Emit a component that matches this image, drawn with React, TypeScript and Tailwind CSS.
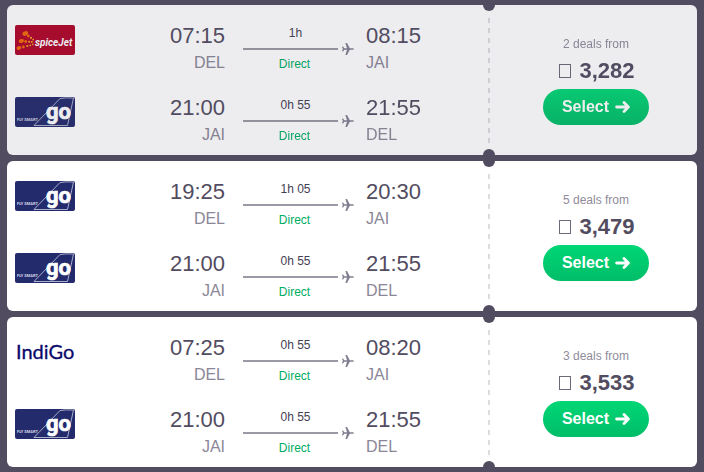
type Airline = "spicejet" | "go" | "indigo";

interface Leg {
  airline: Airline;
  departs: string;
  from: string;
  duration: string;
  arrives: string;
  to: string;
}

interface Itinerary {
  id: number;
  deals: number;
  price: string;
  dimmed?: boolean;
  legs: Leg[];
}

const itineraries: Itinerary[] = [
  {
    id: 1,
    deals: 2,
    price: "3,282",
    dimmed: true,
    legs: [
      { airline: "spicejet", departs: "07:15", from: "DEL", duration: "1h", arrives: "08:15", to: "JAI" },
      { airline: "go", departs: "21:00", from: "JAI", duration: "0h 55", arrives: "21:55", to: "DEL" },
    ],
  },
  {
    id: 2,
    deals: 5,
    price: "3,479",
    legs: [
      { airline: "go", departs: "19:25", from: "DEL", duration: "1h 05", arrives: "20:30", to: "JAI" },
      { airline: "go", departs: "21:00", from: "JAI", duration: "0h 55", arrives: "21:55", to: "DEL" },
    ],
  },
  {
    id: 3,
    deals: 3,
    price: "3,533",
    legs: [
      { airline: "indigo", departs: "07:25", from: "DEL", duration: "0h 55", arrives: "08:20", to: "JAI" },
      { airline: "go", departs: "21:00", from: "JAI", duration: "0h 55", arrives: "21:55", to: "DEL" },
    ],
  },
];

function SpiceJetLogo() {
  return (
    <svg viewBox="0 0 60 30" className="h-[30px] w-[60px]" role="img" aria-label="SpiceJet">
      <rect width="60" height="30" rx="2" fill="#b00529" />
      <g fill="#f26a0a">
        <ellipse cx="10.3" cy="8.5" rx="2.9" ry="2.2" transform="rotate(-20 10.3 8.5)" />
        <ellipse cx="6.4" cy="16" rx="2.7" ry="2" transform="rotate(-15 6.4 16)" />
        <ellipse cx="3.9" cy="23" rx="2.5" ry="1.8" transform="rotate(-25 3.9 23)" />
        <circle cx="13.3" cy="11" r="1.4" />
        <circle cx="10.7" cy="16.5" r="1.4" />
        <circle cx="8.4" cy="22" r="1.4" />
      </g>
      <g fill="#f5a81c">
        <circle cx="16" cy="12.8" r="1.1" />
        <circle cx="18.2" cy="14.6" r="0.9" />
        <circle cx="14.1" cy="16.8" r="1" />
        <circle cx="16.8" cy="17" r="0.9" />
        <circle cx="12.3" cy="21" r="1.1" />
        <circle cx="15.2" cy="20.3" r="0.9" />
        <circle cx="17.8" cy="19.4" r="0.8" />
      </g>
      <text x="20" y="21" fill="#fff" fontFamily="Roboto, sans-serif" fontSize="10" fontWeight="700" fontStyle="italic">
        spiceJet
      </text>
    </svg>
  );
}

function GoLogo() {
  return (
    <svg viewBox="0 0 60 30" className="h-[30px] w-[60px]" role="img" aria-label="GoAir">
      <rect width="60" height="30" rx="2" fill="#232b6d" />
      <path d="M19 28.5 45 1.5Q51 .5 58.5 1L52.5 28.5Z" fill="none" stroke="#b9bdd6" strokeWidth="0.9" />
      <text x="2" y="24" fill="#d3d5e6" fontFamily="Roboto, sans-serif" fontSize="4" fontWeight="700">
        FLY SMART
      </text>
      <text x="31" y="22" fill="#fff" stroke="#fff" strokeWidth="0.7" fontFamily="Roboto, sans-serif" fontSize="22" fontWeight="700">
        go
      </text>
    </svg>
  );
}

function IndiGoLogo() {
  return (
    <svg viewBox="0 0 60 30" className="h-[30px] w-[60px]" role="img" aria-label="IndiGo">
      <text x="1" y="22" fill="#08086a" stroke="#08086a" strokeWidth="0.3" fontFamily="Lato, sans-serif" fontSize="20">
        IndiGo
      </text>
    </svg>
  );
}

const logos = { spicejet: SpiceJetLogo, go: GoLogo, indigo: IndiGoLogo };

function PlaneIcon() {
  return (
    <svg viewBox="0 0 12 12" className="h-3 w-3 shrink-0" fill="#827e91" aria-hidden="true">
      <path d="M0 3.4H1L2.4 5.2H5L3.4 0H5L7.8 5.2H10.6Q12 5.4 12 6T10.6 6.8H7.8L5 12H3.4L5 6.8H2.4L1 8.6H0L.8 6Z" />
    </svg>
  );
}

function LegRow({ leg }: { leg: Leg }) {
  const Logo = logos[leg.airline];
  return (
    <div className="flex items-start">
      <div className="pt-1">
        <Logo />
      </div>
      <div className="flex-[150] text-right">
        <div className="text-[22px] leading-[30px] text-[#524c61]">{leg.departs}</div>
        <div className="text-base leading-6 text-[#8b8798]">{leg.from}</div>
      </div>
      <div className="ml-[18px] mr-3 w-[111px] text-center text-xs">
        <div className="pr-1.5 pt-1 leading-4 text-[#444054]">{leg.duration}</div>
        <div className="flex h-4 items-center justify-between">
          <div className="h-0.5 w-[95px] bg-[#9a9aa4]" />
          <PlaneIcon />
        </div>
        <div className="pr-2 leading-[14px] text-[#00ad62]">Direct</div>
      </div>
      <div className="flex-[122]">
        <div className="text-[22px] leading-[30px] text-[#524c61]">{leg.arrives}</div>
        <div className="text-base leading-6 text-[#8b8798]">{leg.to}</div>
      </div>
    </div>
  );
}

function ItineraryCard({ item }: { item: Itinerary }) {
  return (
    <article className={`flex overflow-hidden rounded-md bg-white ${item.dimmed ? "opacity-90" : ""}`}>
      <div className="flex flex-1 flex-col gap-[18px] pt-4 pb-2 pl-2">
        {item.legs.map((leg, i) => (
          <LegRow key={i} leg={leg} />
        ))}
      </div>

      {/* Ticket perforation */}
      <div className="relative flex w-0.5 justify-center py-3">
        <div className="w-0.5 bg-[repeating-linear-gradient(to_bottom,transparent_0_1px,#dddce1_1px_6px,transparent_6px_10px)]" />
        <span className="absolute -top-1.5 -left-[5px] h-3 w-3 rounded-full bg-[#524c61]" />
        <span className="absolute -bottom-1.5 -left-[5px] h-3 w-3 rounded-full bg-[#524c61]" />
      </div>

      <div className="flex w-[207px] flex-col items-center pt-[31px] pl-[5px]">
        <div className="text-xs leading-4 text-[#8f8b9b]">{item.deals} deals from</div>
        <div className="flex items-center gap-2 pt-[3px] pl-0.5 text-[22px] leading-8 font-bold text-[#524c61]">
          <span className="h-3.5 w-3 border border-[#6d687a]" role="img" aria-label="Rupees" />
          {item.price}
        </div>
        <button
          type="button"
          className="mt-0.5 flex h-9 w-[106px] items-center justify-center gap-1.5 rounded-full bg-linear-to-b from-[#00d775] to-[#00bd68] text-base font-bold text-white"
        >
          Select
          <svg viewBox="0 0 15 12" className="h-3 w-[15px]" fill="none" stroke="currentColor" strokeWidth="2.8" strokeLinecap="round" strokeLinejoin="round" aria-hidden="true">
            <path d="M1.6 6H13M9 1.6 13.4 6 9 10.4" />
          </svg>
        </button>
      </div>
    </article>
  );
}

export default function App() {
  return (
    <main className="flex min-h-screen flex-col gap-1.5 bg-[#524c61] px-[7px] py-[5px] font-['Liberation_Sans',Arial,sans-serif]">
      {itineraries.map((item) => (
        <ItineraryCard key={item.id} item={item} />
      ))}
    </main>
  );
}
